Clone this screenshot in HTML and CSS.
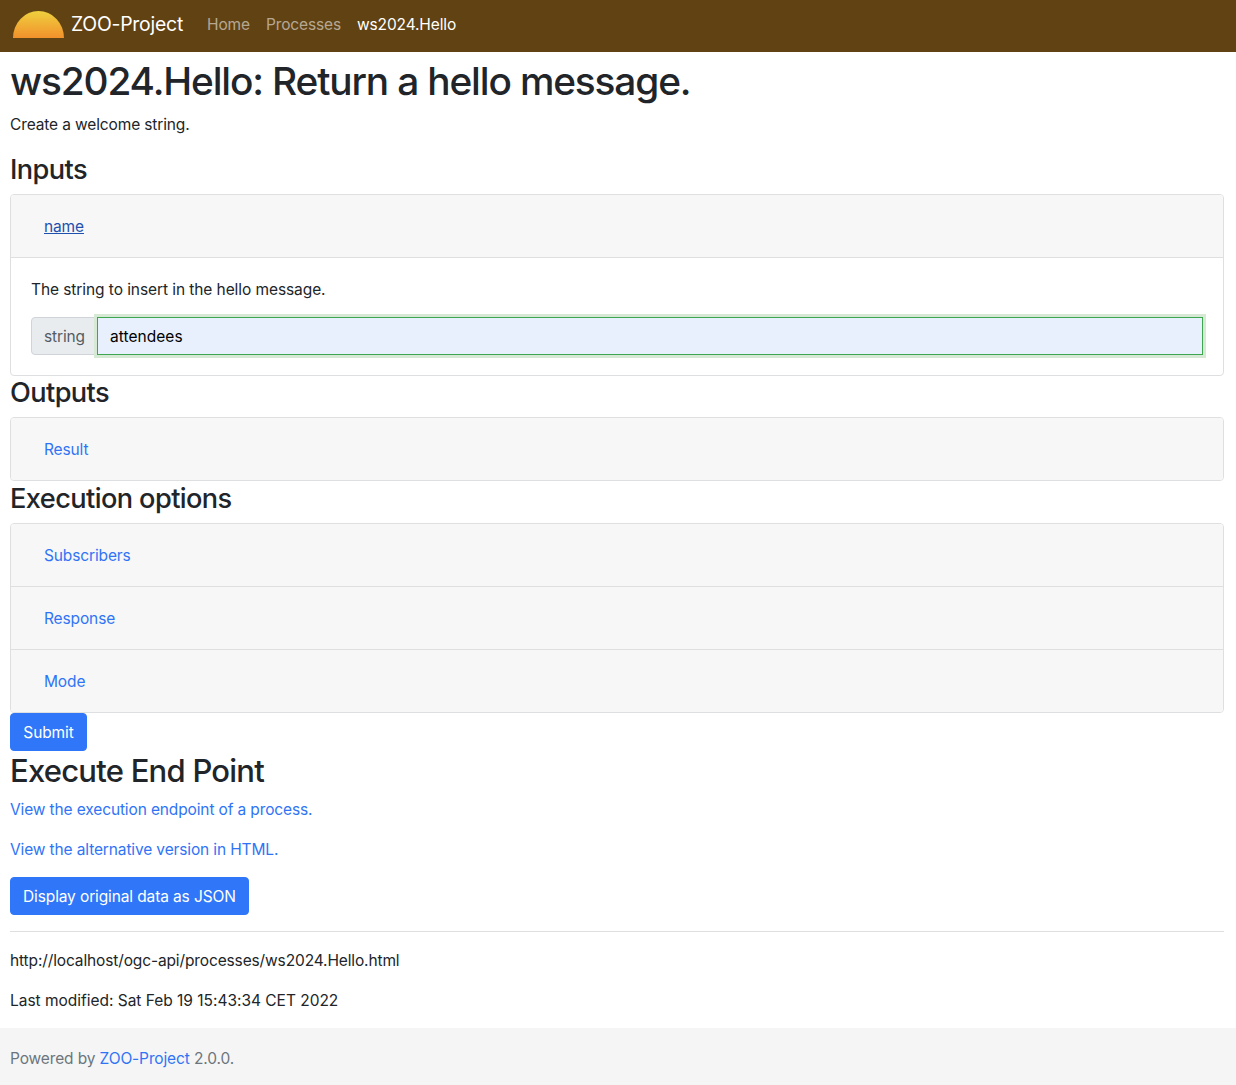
FILE: index.html
```html
<!DOCTYPE html>
<html lang="en">
<head>
<meta charset="utf-8">
<title>ws2024.Hello</title>
<link rel="stylesheet" href="styles.css">
</head>
<body>
<nav class="navbar">
  <a class="brand" href="#">
    <svg class="logo" width="51" height="27" viewBox="0 0 51 27" aria-hidden="true">
      <defs>
        <linearGradient id="sun" x1="0" y1="0" x2="0" y2="1">
          <stop offset="0" stop-color="#efd03e"/>
          <stop offset="1" stop-color="#f2912c"/>
        </linearGradient>
      </defs>
      <path d="M0 27A25.500 27 0 0 1 51 27Z" fill="url(#sun)"/>
    </svg>
    <span>ZOO-Project</span>
  </a>
  <ul class="nav-list">
    <li><a class="nav-link" href="#">Home</a></li>
    <li><a class="nav-link" href="#">Processes</a></li>
    <li><a class="nav-link active" href="#">ws2024.Hello</a></li>
  </ul>
</nav>
<main class="content">
  <h1>ws2024.Hello: Return a hello message.</h1>
  <p>Create a welcome string.</p>
  <h3>Inputs</h3>
  <div class="accordion">
    <div class="acc-header"><a class="acc-link focused" href="#">name</a></div>
    <div class="acc-body">
      <p>The string to insert in the hello message.</p>
      <div class="input-group">
        <span class="input-label">string</span>
        <input class="input-field" type="text" value="attendees">
      </div>
    </div>
  </div>
  <h3>Outputs</h3>
  <div class="accordion">
    <div class="acc-header"><a class="acc-link" href="#">Result</a></div>
  </div>
  <h3>Execution options</h3>
  <div class="accordion">
    <div class="acc-header"><a class="acc-link" href="#">Subscribers</a></div>
    <div class="acc-header"><a class="acc-link" href="#">Response</a></div>
    <div class="acc-header"><a class="acc-link" href="#">Mode</a></div>
  </div>
  <button class="btn btn-submit" type="button">Submit</button>
  <h2>Execute End Point</h2>
  <p><a href="#">View the execution endpoint of a process.</a></p>
  <p><a href="#">View the alternative version in HTML.</a></p>
  <button class="btn btn-block" type="button">Display original data as JSON</button>
  <hr>
  <p>http://localhost/ogc-api/processes/ws2024.Hello.html</p>
  <p class="modified">Last modified: Sat Feb 19 15:43:34 CET 2022</p>
</main>
<footer class="footer">Powered by <a href="#">ZOO-Project</a> 2.0.0.</footer>
</body>
</html>
```

FILE: styles.css
```css
* { box-sizing: border-box; }
html, body { margin: 0; padding: 0; }
body {
  font-family: Inter, "Liberation Sans", sans-serif;
  font-size: 15.5px;
  line-height: 24px;
  letter-spacing: -0.13px;
  color: #212529;
  background: #fff;
}
a { color: #2f74f6; text-decoration: none; }
.navbar {
  display: flex;
  align-items: center;
  height: 52px;
  padding: 0 12px 4px;
  background: #614213;
}
.brand {
  display: flex;
  align-items: center;
  gap: 7px;
  color: #fff;
  font-size: 19.4px;
  line-height: 30px;
  letter-spacing: -0.23px;
  margin-right: 16px;
}
.logo { display: block; margin: 1px 0 0 1px; }
.nav-list {
  display: flex;
  list-style: none;
  margin: 0;
  padding: 0;
}
.nav-link {
  display: block;
  padding: 9px 8px 7px;
  color: rgba(255, 255, 255, 0.55);
}
.nav-link.active { color: #fff; }
.content { padding: 6px 12px 0 10px; }
h1, h2, h3 { margin: 0 0 8px; font-weight: 500; }
h1 { font-size: 38.8px; line-height: 46px; letter-spacing: -1.14px; }
h2 { font-size: 31px; line-height: 38.4px; padding-top: 1px; margin-bottom: 7px; letter-spacing: -0.76px; }
h3 { font-size: 27.2px; line-height: 33.6px; padding-top: 0.6px; margin-bottom: 7.4px; letter-spacing: -0.6px; }
p { margin: 0 0 15px; padding-top: 1px; }
.modified { letter-spacing: -0.02px; }
.accordion {
  border: 1px solid #dedfe0;
  border-radius: 4px;
  overflow: hidden;
}
.acc-header {
  height: 63px;
  padding: 12px 20px;
  background: #f7f7f7;
  border-bottom: 1px solid #dedfe0;
}
.acc-header:last-child { height: 62px; border-bottom: 0; }
.acc-link {
  display: inline-block;
  padding: 8px 13px 6px;
}
.acc-link.focused { color: #1e50ae; text-decoration: underline; }
.acc-body { padding: 19px 20px 20px; }
.acc-body p { letter-spacing: -0.08px; }
.input-group { display: flex; }
.input-label {
  padding: 7px 12px 5px;
  height: 38px;
  color: #555b62;
  background: #e9ecef;
  border: 1px solid #ced4da;
  border-radius: 4px 0 0 4px;
  margin-right: -1px;
}
.input-field {
  flex: 1;
  min-width: 0;
  height: 38px;
  padding: 7px 12px 5px;
  font: inherit;
  letter-spacing: 0.05px;
  color: #000;
  background: #e8f0fe;
  border: 1px solid #3fa650;
  outline: 0;
  box-shadow: 0 0 0 3px #d5e9d5;
  position: relative;
}
.btn {
  display: block;
  height: 38px;
  padding: 7px 12px 5px;
  font: inherit;
  letter-spacing: -0.12px;
  color: #fff;
  background: #2f77f8;
  border: 1px solid #2f77f8;
  border-radius: 4px;
}
.btn-submit { width: 77px; }
.btn-block { margin-bottom: 16px; }
hr {
  margin: 0 0 16px;
  border: 0;
  border-top: 1px solid #dedfe0;
}
.footer {
  padding: 19px 10px 14px;
  min-height: 57px;
  color: #6c757d;
  background: #f5f5f5;
}
```
